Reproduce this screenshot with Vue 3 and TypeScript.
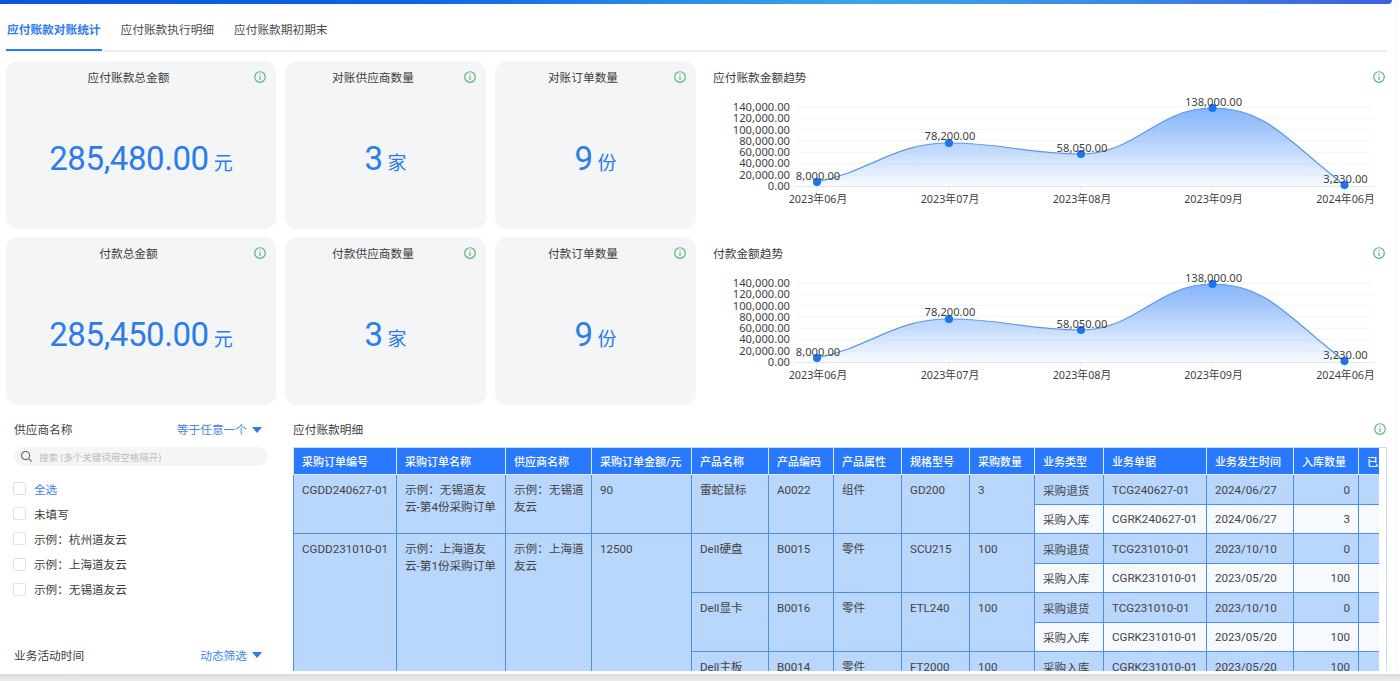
<script setup lang="ts">
interface Kpi { title: string; value: string; unit: string; wide?: boolean }
interface Row {
  hl: boolean
  order?: { no: string; name: string; sup: string; amt: string; span: number }
  prod?: { name: string; code: string; attr: string; spec: string; qty: string; span: number }
  type: string; doc: string; date: string; inQty: string
}
const tabs = ['应付账款对账统计', '应付账款执行明细', '应付账款期初期末']
const row1: Kpi[] = [
  { title: '应付账款总金额', value: '285,480.00', unit: '元', wide: true },
  { title: '对账供应商数量', value: '3', unit: '家' },
  { title: '对账订单数量', value: '9', unit: '份' }
]
const row2: Kpi[] = [
  { title: '付款总金额', value: '285,450.00', unit: '元', wide: true },
  { title: '付款供应商数量', value: '3', unit: '家' },
  { title: '付款订单数量', value: '9', unit: '份' }
]
const xs = [112, 244, 376, 507.5, 639.5]
const months = ['2023年06月', '2023年07月', '2023年08月', '2023年09月', '2024年06月']
const yTicks = ['140,000.00', '120,000.00', '100,000.00', '80,000.00', '60,000.00', '40,000.00', '20,000.00', '0.00']
const tickY = yTicks.map((_, i) => 46 + (i * 79) / 7)
const pts = [
  { v: '8,000.00', y: 121, ly: 115 },
  { v: '78,200.00', y: 82, ly: 75 },
  { v: '58,050.00', y: 93, ly: 87 },
  { v: '138,000.00', y: 47, ly: 41 },
  { v: '3,230.00', y: 124, ly: 118 }
]
function curve(): string {
  const tan = pts.map((p, i) => {
    if (i === 0) return 0.7 * (pts[1].y - p.y) / (xs[1] - xs[0])
    if (i === pts.length - 1) return 1.3 * (p.y - pts[i - 1].y) / (xs[i] - xs[i - 1])
    return 0
  })
  let d = `M${xs[0]} ${pts[0].y}`
  for (let i = 1; i < pts.length; i++) {
    const dx = (xs[i] - xs[i - 1]) * 0.42
    d += ` C${xs[i - 1] + dx} ${pts[i - 1].y + tan[i - 1] * dx} ${xs[i] - dx} ${pts[i].y - tan[i] * dx} ${xs[i]} ${pts[i].y}`
  }
  return d
}
const line = curve()
const area = `${line} L${xs[4]} 125 L${xs[0]} 125 Z`
const charts = [
  { id: 'g1', title: '应付账款金额趋势' },
  { id: 'g2', title: '付款金额趋势' }
]
const options = ['全选', '未填写', '示例：杭州道友云', '示例：上海道友云', '示例：无锡道友云']
const heads = ['采购订单编号', '采购订单名称', '供应商名称', '采购订单金额/元', '产品名称', '产品编码', '产品属性', '规格型号', '采购数量', '业务类型', '业务单据', '业务发生时间', '入库数量', '已入库金额']
const widths = [103, 109, 86, 100, 77, 65, 68, 68, 65, 69, 103, 87, 65, 80]
const rows: Row[] = [
  { hl: true, order: { no: 'CGDD240627-01', name: '示例：无锡道友云-第4份采购订单', sup: '示例：无锡道友云', amt: '90', span: 2 }, prod: { name: '雷蛇鼠标', code: 'A0022', attr: '组件', spec: 'GD200', qty: '3', span: 2 }, type: '采购退货', doc: 'TCG240627-01', date: '2024/06/27', inQty: '0' },
  { hl: false, type: '采购入库', doc: 'CGRK240627-01', date: '2024/06/27', inQty: '3' },
  { hl: true, order: { no: 'CGDD231010-01', name: '示例：上海道友云-第1份采购订单', sup: '示例：上海道友云', amt: '12500', span: 5 }, prod: { name: 'Dell硬盘', code: 'B0015', attr: '零件', spec: 'SCU215', qty: '100', span: 2 }, type: '采购退货', doc: 'TCG231010-01', date: '2023/10/10', inQty: '0' },
  { hl: false, type: '采购入库', doc: 'CGRK231010-01', date: '2023/05/20', inQty: '100' },
  { hl: true, prod: { name: 'Dell显卡', code: 'B0016', attr: '零件', spec: 'ETL240', qty: '100', span: 2 }, type: '采购退货', doc: 'TCG231010-01', date: '2023/10/10', inQty: '0' },
  { hl: false, type: '采购入库', doc: 'CGRK231010-01', date: '2023/05/20', inQty: '100' },
  { hl: true, prod: { name: 'Dell主板', code: 'B0014', attr: '零件', spec: 'FT2000', qty: '100', span: 1 }, type: '采购入库', doc: 'CGRK231010-01', date: '2023/05/20', inQty: '100' }
]
</script>

<template>
  <div class="page">
    <div class="topbar"></div>
    <nav class="tabs">
      <span v-for="(t, i) in tabs" :key="t" class="tab" :class="{ active: i === 0 }">{{ t }}</span>
    </nav>

    <section class="overview">
      <template v-for="(group, gi) in [row1, row2]" :key="gi">
        <div v-for="k in group" :key="k.title" class="card">
          <div class="card-title">{{ k.title }}</div>
          <svg class="info card-info" viewBox="0 0 12 12"><circle cx="6" cy="6" r="5.3" /><path d="M6 5.2V9M6 3v1.1" /></svg>
          <div class="card-value"><span class="num">{{ k.value }}</span><span class="unit">{{ k.unit }}</span></div>
        </div>
        <div class="chart">
          <div class="chart-title">{{ charts[gi].title }}</div>
          <svg class="info chart-info" viewBox="0 0 12 12"><circle cx="6" cy="6" r="5.3" /><path d="M6 5.2V9M6 3v1.1" /></svg>
          <svg class="plot" viewBox="0 0 685 168" width="685" height="168">
            <defs>
              <linearGradient :id="charts[gi].id" x1="0" y1="0" x2="0" y2="1">
                <stop offset="0" stop-color="#6ea6fb" stop-opacity="0.85" />
                <stop offset="1" stop-color="#6ea6fb" stop-opacity="0.05" />
              </linearGradient>
            </defs>
            <line v-for="(y, i) in tickY.slice(0, 7)" :key="i" x1="90" :y1="y" x2="668" :y2="y" class="grid" />
            <line x1="90" y1="125.5" x2="669" y2="125.5" class="axis" />
            <line v-for="x in xs" :key="x" :x1="x" y1="125" :x2="x" y2="130" class="axis" />
            <path :d="area" :fill="`url(#${charts[gi].id})`" />
            <path :d="line" class="curve" />
            <text v-for="(t, i) in yTicks" :key="t" x="85" :y="tickY[i] + 4" class="lbl" text-anchor="end">{{ t }}</text>
            <text v-for="(m, i) in months" :key="m" :x="xs[i] + 1" y="142" class="lbl month" text-anchor="middle">{{ m }}</text>
            <circle v-for="(p, i) in pts" :key="p.v" :cx="xs[i]" :cy="p.y" r="4" class="dot" />
            <text v-for="(p, i) in pts" :key="p.v + 'l'" :x="xs[i] + 1" :y="p.ly + 4" class="lbl" text-anchor="middle">{{ p.v }}</text>
          </svg>
        </div>
      </template>
    </section>

    <section class="lower">
      <aside class="filters">
        <div class="filter-head">
          <span>供应商名称</span>
          <span class="mode">等于任意一个<i class="caret"></i></span>
        </div>
        <div class="search">
          <svg viewBox="0 0 14 14" width="13" height="13"><circle cx="6" cy="6" r="4.4" /><path d="M9.3 9.3 12.6 12.6" /></svg>
          <span>搜索 (多个关键词用空格隔开)</span>
        </div>
        <ul class="options">
          <li v-for="(o, i) in options" :key="o" :class="{ all: i === 0 }"><i class="check"></i>{{ o }}</li>
        </ul>
        <div class="filter-head second">
          <span>业务活动时间</span>
          <span class="mode">动态筛选<i class="caret"></i></span>
        </div>
      </aside>

      <div class="detail">
        <div class="detail-head">
          <span>应付账款明细</span>
          <svg class="info" viewBox="0 0 12 12"><circle cx="6" cy="6" r="5.3" /><path d="M6 5.2V9M6 3v1.1" /></svg>
        </div>
        <div class="table-frame">
          <div class="table-clip">
            <table>
              <colgroup><col v-for="(w, i) in widths" :key="i" :style="{ width: w + 'px' }" /></colgroup>
              <thead><tr><th v-for="h in heads" :key="h">{{ h }}</th></tr></thead>
              <tbody>
                <tr v-for="(r, i) in rows" :key="i" :class="[r.hl ? 'blue' : 'light', i % 2 ? 'h29' : 'h30']">
                  <template v-if="r.order">
                    <td :rowspan="r.order.span" class="merged">{{ r.order.no }}</td>
                    <td :rowspan="r.order.span" class="merged">{{ r.order.name }}</td>
                    <td :rowspan="r.order.span" class="merged sup">{{ r.order.sup }}</td>
                    <td :rowspan="r.order.span" class="merged">{{ r.order.amt }}</td>
                  </template>
                  <template v-if="r.prod">
                    <td :rowspan="r.prod.span" class="merged">{{ r.prod.name }}</td>
                    <td :rowspan="r.prod.span" class="merged">{{ r.prod.code }}</td>
                    <td :rowspan="r.prod.span" class="merged">{{ r.prod.attr }}</td>
                    <td :rowspan="r.prod.span" class="merged">{{ r.prod.spec }}</td>
                    <td :rowspan="r.prod.span" class="merged">{{ r.prod.qty }}</td>
                  </template>
                  <td>{{ r.type }}</td>
                  <td>{{ r.doc }}</td>
                  <td>{{ r.date }}</td>
                  <td class="right">{{ r.inQty }}</td>
                  <td></td>
                </tr>
              </tbody>
            </table>
          </div>
        </div>
      </div>
    </section>
    <div class="bottom-band"></div>
    <div class="edge"></div>
  </div>
</template>

<style scoped>
.page {
  position: relative;
  width: 1400px;
  height: 681px;
  overflow: hidden;
  display: flex;
  flex-direction: column;
  background: #fff;
  color: #3d3d3d;
  font-family: "Noto Sans", "Noto Sans CJK SC", sans-serif;
  font-size: 12px;
}
.edge {
  position: absolute;
  top: 0;
  right: 3px;
  bottom: 10px;
  width: 1px;
  background: #f3f4f6;
}
.topbar {
  height: 4px;
  flex: none;
  margin-right: 8px;
  border-bottom-right-radius: 5px;
  background: linear-gradient(90deg, #0a55dc 0%, #0b66e6 30%, #2c8fe8 50%, #3aa5e8 62%, #3b8ae6 80%, #3d5fe0 100%);
}
.tabs {
  flex: none;
  height: 48px;
  margin: 0 13px 0 6px;
  display: flex;
  gap: 18px;
  align-items: flex-end;
  border-bottom: 2px solid #eceef0;
  box-sizing: border-box;
}
.tab {
  height: 29px;
  margin-bottom: -1px;
  padding: 0 1px;
  font-size: 11.7px;
  line-height: 15px;
  color: #4a4a4a;
  box-sizing: border-box;
}
.tab.active {
  color: #2f7cf0;
  font-weight: 700;
  border-bottom: 2px solid #2f7cf0;
}
.overview {
  flex: none;
  margin: 9px 10px 0 6px;
  display: grid;
  grid-template-columns: 270px 201px 201px 685px;
  grid-auto-rows: 168px;
  column-gap: 9px;
  row-gap: 8px;
}
.card {
  position: relative;
  background: #f4f5f7;
  border-radius: 12px;
  display: flex;
  flex-direction: column;
  align-items: center;
}
.card-title {
  align-self: stretch;
  text-align: center;
  padding-right: 25px;
  margin-top: 8px;
  line-height: 17px;
  font-size: 11.7px;
}
.card-info {
  position: absolute;
  top: 10px;
  right: 10px;
}
.info {
  width: 12px;
  height: 12px;
  fill: none;
  stroke: #58b375;
  stroke-width: 1.15;
  flex: none;
}
.card-value {
  margin-top: 51px;
  color: #2b7bef;
  display: flex;
  align-items: baseline;
}
.num {
  font-family: Roboto, sans-serif;
  font-size: 33px;
  line-height: 44px;
  letter-spacing: -0.4px;
}
.unit {
  margin-left: 5px;
  font-size: 19px;
}
.chart {
  position: relative;
}
.chart-title {
  position: absolute;
  left: 8px;
  top: 8px;
  line-height: 17px;
  font-size: 11.7px;
}
.chart-info {
  position: absolute;
  right: 5px;
  top: 10px;
}
.plot {
  display: block;
}
.grid {
  stroke: #f4f5f7;
  stroke-width: 1;
}
.axis {
  stroke: #e3e6ea;
  stroke-width: 1;
}
.curve {
  fill: none;
  stroke: #5b98e8;
  stroke-width: 1.2;
}
.dot {
  fill: #1b74f5;
}
.lbl {
  font-size: 11.2px;
  fill: #3f3f3f;
}
.month {
  font-size: 10.8px;
}
.lower {
  flex: 1;
  min-height: 0;
  display: flex;
  margin-top: 16px;
}
.filters {
  width: 293px;
  flex: none;
  padding: 0 25px 0 14px;
  box-sizing: border-box;
}
.filter-head {
  display: flex;
  justify-content: space-between;
  align-items: center;
  line-height: 17px;
  font-size: 11.7px;
  margin-right: 6px;
}
.filter-head.second {
  margin-top: 45px;
}
.mode {
  color: #3f83ee;
  display: flex;
  align-items: center;
}
.caret {
  margin-left: 5px;
  width: 0;
  height: 0;
  border-left: 5px solid transparent;
  border-right: 5px solid transparent;
  border-top: 6px solid #2b7bef;
}
.search {
  margin-top: 9px;
  height: 19px;
  background: #f4f5f7;
  border-radius: 10px;
  display: flex;
  align-items: center;
  gap: 6px;
  padding-left: 6px;
  color: #bdbdbd;
  font-size: 9.5px;
}
.search svg {
  fill: none;
  stroke: #666;
  stroke-width: 1.2;
}
.options {
  list-style: none;
  margin: 10px 0 0 -1px;
  padding: 0;
}
.options li {
  height: 25.2px;
  display: flex;
  align-items: center;
  gap: 8px;
  font-size: 11.6px;
}
.options li.all {
  color: #3f83ee;
}
.check {
  width: 13px;
  height: 13px;
  box-sizing: border-box;
  border: 1px solid #e0e2e5;
  border-radius: 2px;
  background: #fff;
}
.detail {
  flex: none;
  width: 1094px;
  display: flex;
  flex-direction: column;
  min-height: 0;
}
.detail-head {
  display: flex;
  justify-content: space-between;
  align-items: flex-start;
  padding-right: 1px;
  line-height: 17px;
  font-size: 11.7px;
}
.detail-head .info {
  margin-top: 2px;
}
.table-frame {
  margin-top: 9px;
  flex: 1;
  min-height: 0;
  border-top: 1px solid #c8dafa;
  border-right: 1px solid #c8dafa;
  padding-right: 7px;
}
.table-clip {
  height: 100%;
  overflow: hidden;
}
table {
  table-layout: fixed;
  border-collapse: collapse;
  width: 1145px;
  margin-top: -1px;
  font-family: Roboto, "Noto Sans CJK SC", sans-serif;
  font-size: 11.6px;
  color: #444;
}
th, td {
  border: 1px solid #4d8eef;
  padding: 0 8px;
  text-align: left;
  box-sizing: border-box;
  white-space: nowrap;
  overflow: hidden;
}
th {
  height: 27px;
  background: #2979ff;
  color: #fff;
  font-weight: 500;
  font-size: 11px;
  border-color: #dbe8ff;
  border-top-color: #4d8eef;
}
tr.h30 { height: 30px; }
tr.h29 { height: 29px; }
tr.blue td { background: #b9d6fd; }
tr.light td { background: #f6f9fe; }
td.merged, tr.light td.merged {
  background: #b9d6fd;
  vertical-align: top;
  padding-top: 7px;
  line-height: 17px;
  white-space: normal;
  word-break: break-all;
}
td.merged.sup {
  padding-right: 4px;
}
td.right { text-align: right; }
.bottom-band {
  flex: none;
  height: 10px;
  background: linear-gradient(#fff 0 25%, #dcdddd 35%, #eaebeb 100%);
}
</style>
